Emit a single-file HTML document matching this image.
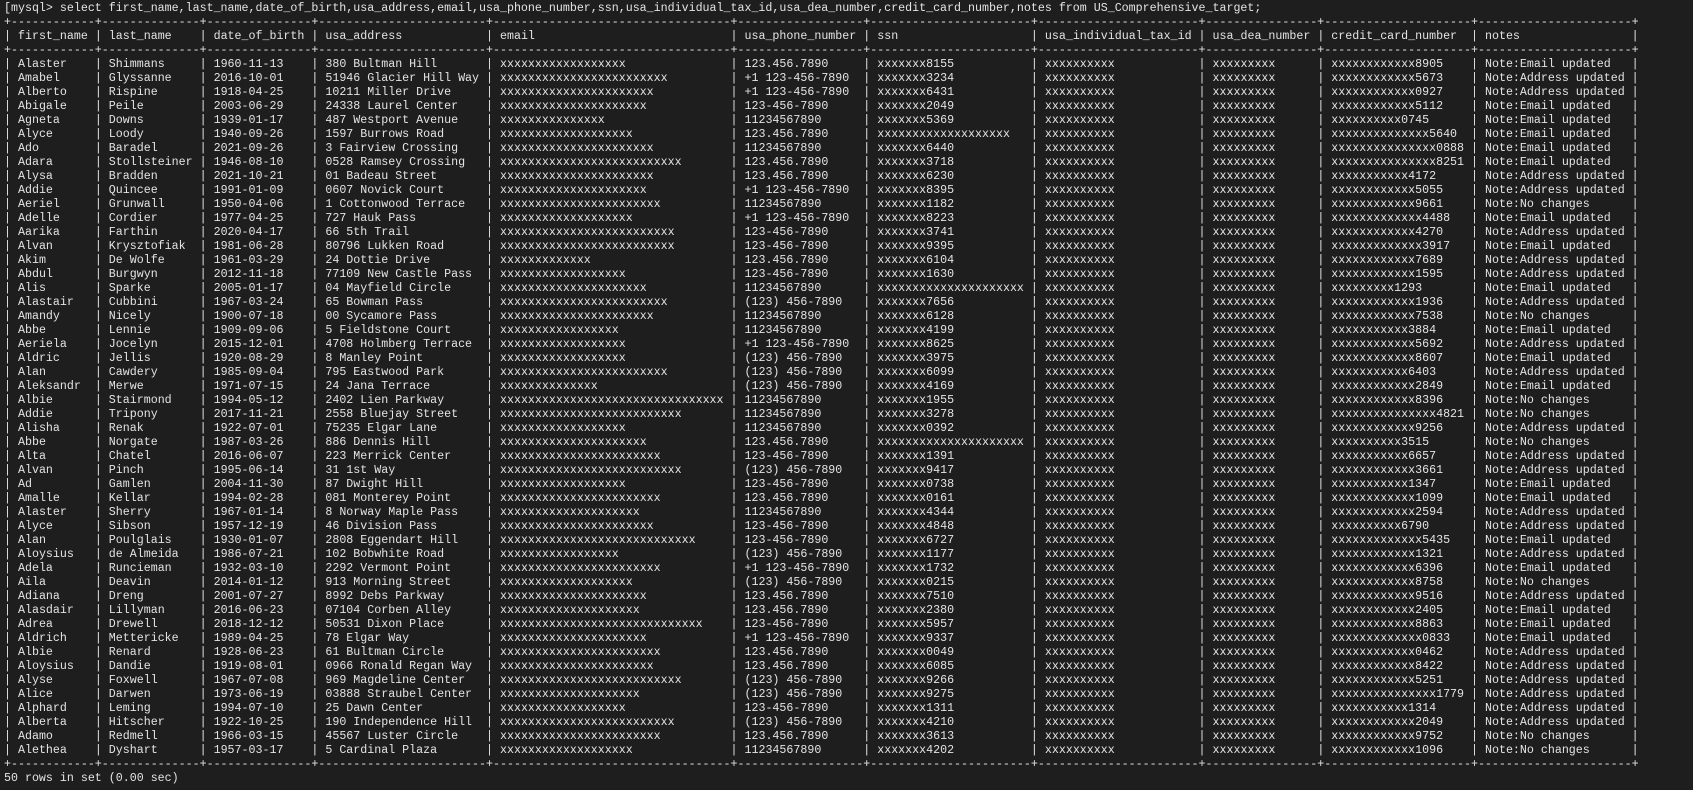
<!DOCTYPE html>
<html><head><meta charset="utf-8">
<style>
html,body{margin:0;padding:0;background:#1e1e1e;}
body{width:1693px;height:790px;overflow:hidden;}
#t{position:absolute;left:4px;top:1.5px;font-family:"Liberation Mono",monospace;font-size:11.65px;line-height:14px;color:#e4e4e4;}
#t p{margin:0;white-space:pre;height:14px;}
#t b{display:inline-block;font-weight:normal;white-space:pre;vertical-align:top;}
#t b:nth-of-type(1){width:10ch}
#t b:nth-of-type(2){width:12ch}
#t b:nth-of-type(3){width:13ch}
#t b:nth-of-type(4){width:22ch}
#t b:nth-of-type(5){width:32ch}
#t b:nth-of-type(6){width:16ch}
#t b:nth-of-type(7){width:21ch}
#t b:nth-of-type(8){width:21ch}
#t b:nth-of-type(9){width:14ch}
#t b:nth-of-type(10){width:19ch}
#t b:nth-of-type(11){width:20ch}
</style></head><body><div id="t">
<p>[mysql&gt; select first_name,last_name,date_of_birth,usa_address,email,usa_phone_number,ssn,usa_individual_tax_id,usa_dea_number,credit_card_number,notes from US_Comprehensive_target;</p>
<p>+------------+--------------+---------------+------------------------+----------------------------------+------------------+-----------------------+-----------------------+----------------+---------------------+----------------------+</p>
<p>| <b>first_name</b> | <b>last_name</b> | <b>date_of_birth</b> | <b>usa_address</b> | <b>email</b> | <b>usa_phone_number</b> | <b>ssn</b> | <b>usa_individual_tax_id</b> | <b>usa_dea_number</b> | <b>credit_card_number</b> | <b>notes</b> |</p>
<p>+------------+--------------+---------------+------------------------+----------------------------------+------------------+-----------------------+-----------------------+----------------+---------------------+----------------------+</p>
<p>| <b>Alaster</b> | <b>Shimmans</b> | <b>1960-11-13</b> | <b>380 Bultman Hill</b> | <b>xxxxxxxxxxxxxxxxxx</b> | <b>123.456.7890</b> | <b>xxxxxxx8155</b> | <b>xxxxxxxxxx</b> | <b>xxxxxxxxx</b> | <b>xxxxxxxxxxxx8905</b> | <b>Note:Email updated</b> |</p>
<p>| <b>Amabel</b> | <b>Glyssanne</b> | <b>2016-10-01</b> | <b>51946 Glacier Hill Way</b> | <b>xxxxxxxxxxxxxxxxxxxxxxxx</b> | <b>+1 123-456-7890</b> | <b>xxxxxxx3234</b> | <b>xxxxxxxxxx</b> | <b>xxxxxxxxx</b> | <b>xxxxxxxxxxxx5673</b> | <b>Note:Address updated</b> |</p>
<p>| <b>Alberto</b> | <b>Rispine</b> | <b>1918-04-25</b> | <b>10211 Miller Drive</b> | <b>xxxxxxxxxxxxxxxxxxxxxx</b> | <b>+1 123-456-7890</b> | <b>xxxxxxx6431</b> | <b>xxxxxxxxxx</b> | <b>xxxxxxxxx</b> | <b>xxxxxxxxxxxx0927</b> | <b>Note:Address updated</b> |</p>
<p>| <b>Abigale</b> | <b>Peile</b> | <b>2003-06-29</b> | <b>24338 Laurel Center</b> | <b>xxxxxxxxxxxxxxxxxxxxx</b> | <b>123-456-7890</b> | <b>xxxxxxx2049</b> | <b>xxxxxxxxxx</b> | <b>xxxxxxxxx</b> | <b>xxxxxxxxxxxx5112</b> | <b>Note:Email updated</b> |</p>
<p>| <b>Agneta</b> | <b>Downs</b> | <b>1939-01-17</b> | <b>487 Westport Avenue</b> | <b>xxxxxxxxxxxxxxx</b> | <b>11234567890</b> | <b>xxxxxxx5369</b> | <b>xxxxxxxxxx</b> | <b>xxxxxxxxx</b> | <b>xxxxxxxxxx0745</b> | <b>Note:Email updated</b> |</p>
<p>| <b>Alyce</b> | <b>Loody</b> | <b>1940-09-26</b> | <b>1597 Burrows Road</b> | <b>xxxxxxxxxxxxxxxxxxx</b> | <b>123.456.7890</b> | <b>xxxxxxxxxxxxxxxxxxx</b> | <b>xxxxxxxxxx</b> | <b>xxxxxxxxx</b> | <b>xxxxxxxxxxxxxx5640</b> | <b>Note:Email updated</b> |</p>
<p>| <b>Ado</b> | <b>Baradel</b> | <b>2021-09-26</b> | <b>3 Fairview Crossing</b> | <b>xxxxxxxxxxxxxxxxxxxxxx</b> | <b>11234567890</b> | <b>xxxxxxx6440</b> | <b>xxxxxxxxxx</b> | <b>xxxxxxxxx</b> | <b>xxxxxxxxxxxxxxx0888</b> | <b>Note:Email updated</b> |</p>
<p>| <b>Adara</b> | <b>Stollsteiner</b> | <b>1946-08-10</b> | <b>0528 Ramsey Crossing</b> | <b>xxxxxxxxxxxxxxxxxxxxxxxxxx</b> | <b>123.456.7890</b> | <b>xxxxxxx3718</b> | <b>xxxxxxxxxx</b> | <b>xxxxxxxxx</b> | <b>xxxxxxxxxxxxxxx8251</b> | <b>Note:Email updated</b> |</p>
<p>| <b>Alysa</b> | <b>Bradden</b> | <b>2021-10-21</b> | <b>01 Badeau Street</b> | <b>xxxxxxxxxxxxxxxxxxxxxx</b> | <b>123.456.7890</b> | <b>xxxxxxx6230</b> | <b>xxxxxxxxxx</b> | <b>xxxxxxxxx</b> | <b>xxxxxxxxxxx4172</b> | <b>Note:Address updated</b> |</p>
<p>| <b>Addie</b> | <b>Quincee</b> | <b>1991-01-09</b> | <b>0607 Novick Court</b> | <b>xxxxxxxxxxxxxxxxxxxxx</b> | <b>+1 123-456-7890</b> | <b>xxxxxxx8395</b> | <b>xxxxxxxxxx</b> | <b>xxxxxxxxx</b> | <b>xxxxxxxxxxxx5055</b> | <b>Note:Address updated</b> |</p>
<p>| <b>Aeriel</b> | <b>Grunwall</b> | <b>1950-04-06</b> | <b>1 Cottonwood Terrace</b> | <b>xxxxxxxxxxxxxxxxxxxxxxx</b> | <b>11234567890</b> | <b>xxxxxxx1182</b> | <b>xxxxxxxxxx</b> | <b>xxxxxxxxx</b> | <b>xxxxxxxxxxxx9661</b> | <b>Note:No changes</b> |</p>
<p>| <b>Adelle</b> | <b>Cordier</b> | <b>1977-04-25</b> | <b>727 Hauk Pass</b> | <b>xxxxxxxxxxxxxxxxxxx</b> | <b>+1 123-456-7890</b> | <b>xxxxxxx8223</b> | <b>xxxxxxxxxx</b> | <b>xxxxxxxxx</b> | <b>xxxxxxxxxxxxx4488</b> | <b>Note:Email updated</b> |</p>
<p>| <b>Aarika</b> | <b>Farthin</b> | <b>2020-04-17</b> | <b>66 5th Trail</b> | <b>xxxxxxxxxxxxxxxxxxxxxxxxx</b> | <b>123-456-7890</b> | <b>xxxxxxx3741</b> | <b>xxxxxxxxxx</b> | <b>xxxxxxxxx</b> | <b>xxxxxxxxxxxx4270</b> | <b>Note:Address updated</b> |</p>
<p>| <b>Alvan</b> | <b>Krysztofiak</b> | <b>1981-06-28</b> | <b>80796 Lukken Road</b> | <b>xxxxxxxxxxxxxxxxxxxxxxxxx</b> | <b>123-456-7890</b> | <b>xxxxxxx9395</b> | <b>xxxxxxxxxx</b> | <b>xxxxxxxxx</b> | <b>xxxxxxxxxxxxx3917</b> | <b>Note:Email updated</b> |</p>
<p>| <b>Akim</b> | <b>De Wolfe</b> | <b>1961-03-29</b> | <b>24 Dottie Drive</b> | <b>xxxxxxxxxxxxx</b> | <b>123.456.7890</b> | <b>xxxxxxx6104</b> | <b>xxxxxxxxxx</b> | <b>xxxxxxxxx</b> | <b>xxxxxxxxxxxx7689</b> | <b>Note:Address updated</b> |</p>
<p>| <b>Abdul</b> | <b>Burgwyn</b> | <b>2012-11-18</b> | <b>77109 New Castle Pass</b> | <b>xxxxxxxxxxxxxxxxxx</b> | <b>123-456-7890</b> | <b>xxxxxxx1630</b> | <b>xxxxxxxxxx</b> | <b>xxxxxxxxx</b> | <b>xxxxxxxxxxxx1595</b> | <b>Note:Address updated</b> |</p>
<p>| <b>Alis</b> | <b>Sparke</b> | <b>2005-01-17</b> | <b>04 Mayfield Circle</b> | <b>xxxxxxxxxxxxxxxxxxxxx</b> | <b>11234567890</b> | <b>xxxxxxxxxxxxxxxxxxxxx</b> | <b>xxxxxxxxxx</b> | <b>xxxxxxxxx</b> | <b>xxxxxxxxx1293</b> | <b>Note:Email updated</b> |</p>
<p>| <b>Alastair</b> | <b>Cubbini</b> | <b>1967-03-24</b> | <b>65 Bowman Pass</b> | <b>xxxxxxxxxxxxxxxxxxxxxxxx</b> | <b>(123) 456-7890</b> | <b>xxxxxxx7656</b> | <b>xxxxxxxxxx</b> | <b>xxxxxxxxx</b> | <b>xxxxxxxxxxxx1936</b> | <b>Note:Address updated</b> |</p>
<p>| <b>Amandy</b> | <b>Nicely</b> | <b>1900-07-18</b> | <b>00 Sycamore Pass</b> | <b>xxxxxxxxxxxxxxxxxxxxxx</b> | <b>11234567890</b> | <b>xxxxxxx6128</b> | <b>xxxxxxxxxx</b> | <b>xxxxxxxxx</b> | <b>xxxxxxxxxxxx7538</b> | <b>Note:No changes</b> |</p>
<p>| <b>Abbe</b> | <b>Lennie</b> | <b>1909-09-06</b> | <b>5 Fieldstone Court</b> | <b>xxxxxxxxxxxxxxxxx</b> | <b>11234567890</b> | <b>xxxxxxx4199</b> | <b>xxxxxxxxxx</b> | <b>xxxxxxxxx</b> | <b>xxxxxxxxxxx3884</b> | <b>Note:Email updated</b> |</p>
<p>| <b>Aeriela</b> | <b>Jocelyn</b> | <b>2015-12-01</b> | <b>4708 Holmberg Terrace</b> | <b>xxxxxxxxxxxxxxxxxx</b> | <b>+1 123-456-7890</b> | <b>xxxxxxx8625</b> | <b>xxxxxxxxxx</b> | <b>xxxxxxxxx</b> | <b>xxxxxxxxxxxx5692</b> | <b>Note:Address updated</b> |</p>
<p>| <b>Aldric</b> | <b>Jellis</b> | <b>1920-08-29</b> | <b>8 Manley Point</b> | <b>xxxxxxxxxxxxxxxxxx</b> | <b>(123) 456-7890</b> | <b>xxxxxxx3975</b> | <b>xxxxxxxxxx</b> | <b>xxxxxxxxx</b> | <b>xxxxxxxxxxxx8607</b> | <b>Note:Email updated</b> |</p>
<p>| <b>Alan</b> | <b>Cawdery</b> | <b>1985-09-04</b> | <b>795 Eastwood Park</b> | <b>xxxxxxxxxxxxxxxxxxxxxxxx</b> | <b>(123) 456-7890</b> | <b>xxxxxxx6099</b> | <b>xxxxxxxxxx</b> | <b>xxxxxxxxx</b> | <b>xxxxxxxxxxx6403</b> | <b>Note:Address updated</b> |</p>
<p>| <b>Aleksandr</b> | <b>Merwe</b> | <b>1971-07-15</b> | <b>24 Jana Terrace</b> | <b>xxxxxxxxxxxxxx</b> | <b>(123) 456-7890</b> | <b>xxxxxxx4169</b> | <b>xxxxxxxxxx</b> | <b>xxxxxxxxx</b> | <b>xxxxxxxxxxxx2849</b> | <b>Note:Email updated</b> |</p>
<p>| <b>Albie</b> | <b>Stairmond</b> | <b>1994-05-12</b> | <b>2402 Lien Parkway</b> | <b>xxxxxxxxxxxxxxxxxxxxxxxxxxxxxxxx</b> | <b>11234567890</b> | <b>xxxxxxx1955</b> | <b>xxxxxxxxxx</b> | <b>xxxxxxxxx</b> | <b>xxxxxxxxxxxx8396</b> | <b>Note:No changes</b> |</p>
<p>| <b>Addie</b> | <b>Tripony</b> | <b>2017-11-21</b> | <b>2558 Bluejay Street</b> | <b>xxxxxxxxxxxxxxxxxxxxxxxxxx</b> | <b>11234567890</b> | <b>xxxxxxx3278</b> | <b>xxxxxxxxxx</b> | <b>xxxxxxxxx</b> | <b>xxxxxxxxxxxxxxx4821</b> | <b>Note:No changes</b> |</p>
<p>| <b>Alisha</b> | <b>Renak</b> | <b>1922-07-01</b> | <b>75235 Elgar Lane</b> | <b>xxxxxxxxxxxxxxxxxx</b> | <b>11234567890</b> | <b>xxxxxxx0392</b> | <b>xxxxxxxxxx</b> | <b>xxxxxxxxx</b> | <b>xxxxxxxxxxxx9256</b> | <b>Note:Address updated</b> |</p>
<p>| <b>Abbe</b> | <b>Norgate</b> | <b>1987-03-26</b> | <b>886 Dennis Hill</b> | <b>xxxxxxxxxxxxxxxxxxxxx</b> | <b>123.456.7890</b> | <b>xxxxxxxxxxxxxxxxxxxxx</b> | <b>xxxxxxxxxx</b> | <b>xxxxxxxxx</b> | <b>xxxxxxxxxx3515</b> | <b>Note:No changes</b> |</p>
<p>| <b>Alta</b> | <b>Chatel</b> | <b>2016-06-07</b> | <b>223 Merrick Center</b> | <b>xxxxxxxxxxxxxxxxxxxxxxx</b> | <b>123-456-7890</b> | <b>xxxxxxx1391</b> | <b>xxxxxxxxxx</b> | <b>xxxxxxxxx</b> | <b>xxxxxxxxxxx6657</b> | <b>Note:Address updated</b> |</p>
<p>| <b>Alvan</b> | <b>Pinch</b> | <b>1995-06-14</b> | <b>31 1st Way</b> | <b>xxxxxxxxxxxxxxxxxxxxxxxxxx</b> | <b>(123) 456-7890</b> | <b>xxxxxxx9417</b> | <b>xxxxxxxxxx</b> | <b>xxxxxxxxx</b> | <b>xxxxxxxxxxxx3661</b> | <b>Note:Address updated</b> |</p>
<p>| <b>Ad</b> | <b>Gamlen</b> | <b>2004-11-30</b> | <b>87 Dwight Hill</b> | <b>xxxxxxxxxxxxxxxxxx</b> | <b>123-456-7890</b> | <b>xxxxxxx0738</b> | <b>xxxxxxxxxx</b> | <b>xxxxxxxxx</b> | <b>xxxxxxxxxxx1347</b> | <b>Note:Email updated</b> |</p>
<p>| <b>Amalle</b> | <b>Kellar</b> | <b>1994-02-28</b> | <b>081 Monterey Point</b> | <b>xxxxxxxxxxxxxxxxxxxxxxx</b> | <b>123.456.7890</b> | <b>xxxxxxx0161</b> | <b>xxxxxxxxxx</b> | <b>xxxxxxxxx</b> | <b>xxxxxxxxxxxx1099</b> | <b>Note:Email updated</b> |</p>
<p>| <b>Alaster</b> | <b>Sherry</b> | <b>1967-01-14</b> | <b>8 Norway Maple Pass</b> | <b>xxxxxxxxxxxxxxxxxxxx</b> | <b>11234567890</b> | <b>xxxxxxx4344</b> | <b>xxxxxxxxxx</b> | <b>xxxxxxxxx</b> | <b>xxxxxxxxxxxx2594</b> | <b>Note:Address updated</b> |</p>
<p>| <b>Alyce</b> | <b>Sibson</b> | <b>1957-12-19</b> | <b>46 Division Pass</b> | <b>xxxxxxxxxxxxxxxxxxxxxx</b> | <b>123-456-7890</b> | <b>xxxxxxx4848</b> | <b>xxxxxxxxxx</b> | <b>xxxxxxxxx</b> | <b>xxxxxxxxxx6790</b> | <b>Note:Address updated</b> |</p>
<p>| <b>Alan</b> | <b>Poulglais</b> | <b>1930-01-07</b> | <b>2808 Eggendart Hill</b> | <b>xxxxxxxxxxxxxxxxxxxxxxxxxxxx</b> | <b>123-456-7890</b> | <b>xxxxxxx6727</b> | <b>xxxxxxxxxx</b> | <b>xxxxxxxxx</b> | <b>xxxxxxxxxxxxx5435</b> | <b>Note:Email updated</b> |</p>
<p>| <b>Aloysius</b> | <b>de Almeida</b> | <b>1986-07-21</b> | <b>102 Bobwhite Road</b> | <b>xxxxxxxxxxxxxxxxx</b> | <b>(123) 456-7890</b> | <b>xxxxxxx1177</b> | <b>xxxxxxxxxx</b> | <b>xxxxxxxxx</b> | <b>xxxxxxxxxxxx1321</b> | <b>Note:Address updated</b> |</p>
<p>| <b>Adela</b> | <b>Runcieman</b> | <b>1932-03-10</b> | <b>2292 Vermont Point</b> | <b>xxxxxxxxxxxxxxxxxxxxxxx</b> | <b>+1 123-456-7890</b> | <b>xxxxxxx1732</b> | <b>xxxxxxxxxx</b> | <b>xxxxxxxxx</b> | <b>xxxxxxxxxxxx6396</b> | <b>Note:Email updated</b> |</p>
<p>| <b>Aila</b> | <b>Deavin</b> | <b>2014-01-12</b> | <b>913 Morning Street</b> | <b>xxxxxxxxxxxxxxxxxxx</b> | <b>(123) 456-7890</b> | <b>xxxxxxx0215</b> | <b>xxxxxxxxxx</b> | <b>xxxxxxxxx</b> | <b>xxxxxxxxxxxx8758</b> | <b>Note:No changes</b> |</p>
<p>| <b>Adiana</b> | <b>Dreng</b> | <b>2001-07-27</b> | <b>8992 Debs Parkway</b> | <b>xxxxxxxxxxxxxxxxxxxxx</b> | <b>123.456.7890</b> | <b>xxxxxxx7510</b> | <b>xxxxxxxxxx</b> | <b>xxxxxxxxx</b> | <b>xxxxxxxxxxxx9516</b> | <b>Note:Address updated</b> |</p>
<p>| <b>Alasdair</b> | <b>Lillyman</b> | <b>2016-06-23</b> | <b>07104 Corben Alley</b> | <b>xxxxxxxxxxxxxxxxxxxx</b> | <b>123.456.7890</b> | <b>xxxxxxx2380</b> | <b>xxxxxxxxxx</b> | <b>xxxxxxxxx</b> | <b>xxxxxxxxxxxx2405</b> | <b>Note:Email updated</b> |</p>
<p>| <b>Adrea</b> | <b>Drewell</b> | <b>2018-12-12</b> | <b>50531 Dixon Place</b> | <b>xxxxxxxxxxxxxxxxxxxxxxxxxxxxx</b> | <b>123-456-7890</b> | <b>xxxxxxx5957</b> | <b>xxxxxxxxxx</b> | <b>xxxxxxxxx</b> | <b>xxxxxxxxxxxx8863</b> | <b>Note:Email updated</b> |</p>
<p>| <b>Aldrich</b> | <b>Mettericke</b> | <b>1989-04-25</b> | <b>78 Elgar Way</b> | <b>xxxxxxxxxxxxxxxxxxxxx</b> | <b>+1 123-456-7890</b> | <b>xxxxxxx9337</b> | <b>xxxxxxxxxx</b> | <b>xxxxxxxxx</b> | <b>xxxxxxxxxxxxx0833</b> | <b>Note:Email updated</b> |</p>
<p>| <b>Albie</b> | <b>Renard</b> | <b>1928-06-23</b> | <b>61 Bultman Circle</b> | <b>xxxxxxxxxxxxxxxxxxxxxxx</b> | <b>123.456.7890</b> | <b>xxxxxxx0049</b> | <b>xxxxxxxxxx</b> | <b>xxxxxxxxx</b> | <b>xxxxxxxxxxxx0462</b> | <b>Note:Address updated</b> |</p>
<p>| <b>Aloysius</b> | <b>Dandie</b> | <b>1919-08-01</b> | <b>0966 Ronald Regan Way</b> | <b>xxxxxxxxxxxxxxxxxxxxxx</b> | <b>123.456.7890</b> | <b>xxxxxxx6085</b> | <b>xxxxxxxxxx</b> | <b>xxxxxxxxx</b> | <b>xxxxxxxxxxxx8422</b> | <b>Note:Address updated</b> |</p>
<p>| <b>Alyse</b> | <b>Foxwell</b> | <b>1967-07-08</b> | <b>969 Magdeline Center</b> | <b>xxxxxxxxxxxxxxxxxxxxxxxxxx</b> | <b>(123) 456-7890</b> | <b>xxxxxxx9266</b> | <b>xxxxxxxxxx</b> | <b>xxxxxxxxx</b> | <b>xxxxxxxxxxxx5251</b> | <b>Note:Address updated</b> |</p>
<p>| <b>Alice</b> | <b>Darwen</b> | <b>1973-06-19</b> | <b>03888 Straubel Center</b> | <b>xxxxxxxxxxxxxxxxxxxx</b> | <b>(123) 456-7890</b> | <b>xxxxxxx9275</b> | <b>xxxxxxxxxx</b> | <b>xxxxxxxxx</b> | <b>xxxxxxxxxxxxxxx1779</b> | <b>Note:Address updated</b> |</p>
<p>| <b>Alphard</b> | <b>Leming</b> | <b>1994-07-10</b> | <b>25 Dawn Center</b> | <b>xxxxxxxxxxxxxxxxxx</b> | <b>123-456-7890</b> | <b>xxxxxxx1311</b> | <b>xxxxxxxxxx</b> | <b>xxxxxxxxx</b> | <b>xxxxxxxxxxx1314</b> | <b>Note:Address updated</b> |</p>
<p>| <b>Alberta</b> | <b>Hitscher</b> | <b>1922-10-25</b> | <b>190 Independence Hill</b> | <b>xxxxxxxxxxxxxxxxxxxxxxxxx</b> | <b>(123) 456-7890</b> | <b>xxxxxxx4210</b> | <b>xxxxxxxxxx</b> | <b>xxxxxxxxx</b> | <b>xxxxxxxxxxxx2049</b> | <b>Note:Address updated</b> |</p>
<p>| <b>Adamo</b> | <b>Redmell</b> | <b>1966-03-15</b> | <b>45567 Luster Circle</b> | <b>xxxxxxxxxxxxxxxxxxxxxxx</b> | <b>123.456.7890</b> | <b>xxxxxxx3613</b> | <b>xxxxxxxxxx</b> | <b>xxxxxxxxx</b> | <b>xxxxxxxxxxxx9752</b> | <b>Note:No changes</b> |</p>
<p>| <b>Alethea</b> | <b>Dyshart</b> | <b>1957-03-17</b> | <b>5 Cardinal Plaza</b> | <b>xxxxxxxxxxxxxxxxxxx</b> | <b>11234567890</b> | <b>xxxxxxx4202</b> | <b>xxxxxxxxxx</b> | <b>xxxxxxxxx</b> | <b>xxxxxxxxxxxx1096</b> | <b>Note:No changes</b> |</p>
<p>+------------+--------------+---------------+------------------------+----------------------------------+------------------+-----------------------+-----------------------+----------------+---------------------+----------------------+</p>
<p>50 rows in set (0.00 sec)</p>
</div></body></html>
